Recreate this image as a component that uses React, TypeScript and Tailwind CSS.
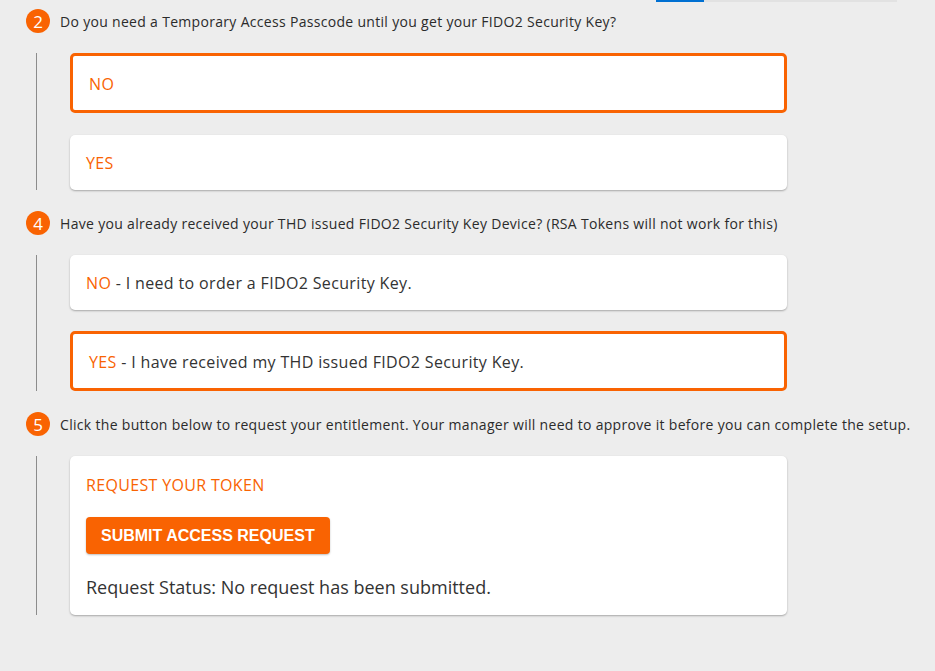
import React from 'react'

const orange = 'text-[#f96302]'

function Step({ n, label, children, last }: { n: number; label: string; children: React.ReactNode; last?: boolean }) {
  return (
    <div className={last ? '' : 'mb-[21px]'}>
      <div className="flex h-6 items-center">
        <div className="flex h-6 w-6 items-center justify-center rounded-full bg-[#f96302] text-[17px] leading-none text-white">
          {n}
        </div>
        <p className="ml-[10px] text-[14px] tracking-[0.31px] text-[#2b2b2b]">{label}</p>
      </div>
      <div className="ml-[10px] mt-5 w-[751px] border-l border-[#8c8c8c] pl-[33px]">{children}</div>
    </div>
  )
}

function Choice({ selected, answer, detail }: { selected?: boolean; answer: string; detail?: string }) {
  return (
    <div
      className={
        selected
          ? 'flex h-[60px] items-center rounded-[5px] border-[3px] border-[#f96302] bg-white px-4'
          : 'flex h-[55px] items-center rounded-[5px] bg-white px-4 shadow-[0_1px_2px_rgba(0,0,0,0.3)]'
      }
    >
      <span className="pt-px text-[16px] tracking-[0.35px] text-[#333]">
        <span className={orange}>{answer}</span>
        {detail && <> - {detail}</>}
      </span>
    </div>
  )
}

export default function App() {
  return (
    <div className="min-h-screen bg-[#ededed] font-['Open_Sans',sans-serif]">
      <div className="ml-[656px] flex h-[2px] w-[241px]">
        <div className="w-12 bg-[#0070d2]" />
        <div className="flex-1 bg-[#e2e2e2]" />
      </div>
      <div className="pl-[26px] pt-[7px]">
        <Step n={2} label="Do you need a Temporary Access Passcode until you get your FIDO2 Security Key?">
          <div className="flex flex-col gap-[22px]">
            <Choice selected answer="NO" />
            <Choice answer="YES" />
          </div>
        </Step>
        <Step n={4} label="Have you already received your THD issued FIDO2 Security Key Device? (RSA Tokens will not work for this)">
          <div className="flex flex-col gap-[21px]">
            <Choice answer="NO" detail="I need to order a FIDO2 Security Key." />
            <Choice selected answer="YES" detail="I have received my THD issued FIDO2 Security Key." />
          </div>
        </Step>
        <Step
          last
          n={5}
          label="Click the button below to request your entitlement. Your manager will need to approve it before you can complete the setup."
        >
          <div className="rounded-[5px] bg-white px-4 pb-[15px] pt-[17px] shadow-[0_1px_2px_rgba(0,0,0,0.3)]">
            <h3 className={`text-[16px] leading-6 tracking-[0.33px] ${orange}`}>REQUEST YOUR TOKEN</h3>
            <button className="mt-5 h-[37px] rounded-[4px] bg-[#f96302] px-[15px] font-['Liberation_Sans',Arial,sans-serif] text-[16px] font-bold text-white shadow-[0_1px_2px_rgba(0,0,0,0.25)]">
              SUBMIT ACCESS REQUEST
            </button>
            <p className="mt-5 text-[18px] leading-[26px] text-[#333]">Request Status: No request has been submitted.</p>
          </div>
        </Step>
      </div>
    </div>
  )
}
